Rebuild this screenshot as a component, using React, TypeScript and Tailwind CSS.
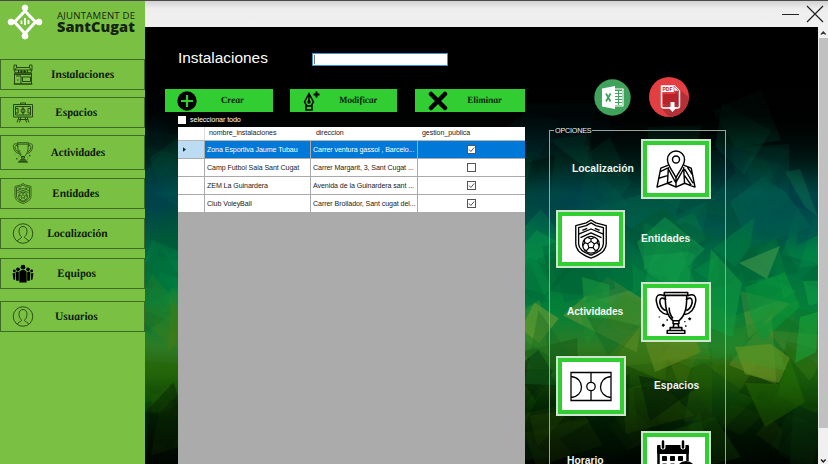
import React from "react";

const sans = "font-['Liberation_Sans',Arial,sans-serif]";
const script = "font-['Liberation_Serif',serif] font-bold italic";

type IconProps = { className?: string };

/* ---------- sidebar + tile drawings ---------- */

const Store = ({ className }: IconProps) => (
  <svg viewBox="0 0 42 42" className={className} fill="none" stroke="currentColor" strokeWidth="1.8">
    <path d="M3 2h5v5h26V2h5v10l-3 6H6l-3-6zM3 12h36M8 7l-3 5M34 7l3 5M4 18h34v22H4zM7 24h10v16M20 26h16v9H20zM2 40h38M4 21h34M12 12v6M18 12v6M24 12v6M30 12v6M9 32h3" />
    <path d="M11 15h20" strokeWidth="3" strokeDasharray="2 1.5" />
  </svg>
);

const Board = ({ className }: IconProps) => (
  <svg viewBox="0 0 42 42" className={className} fill="none" stroke="currentColor" strokeWidth="1.8">
    <path d="M2 5h38v25H2zM6 9h30v17H6zM21 9v17M16 5V2h10v3M13 30l-4 11M17 30l-3 11M29 30l4 11M25 30l3 11M12 35h18M6 13h5v9H6M36 13h-5v9h5" />
    <circle cx="21" cy="17.500" r="4" />
  </svg>
);

const Trophy = ({ className }: IconProps) => (
  <svg viewBox="0 0 44 44" className={className} fill="none" stroke="currentColor" strokeWidth="1.6" strokeLinejoin="round">
    <path d="M10 1.500h24v3H10zM11 4.500c0 12 1 20 8 26h6c7-6 8-14 8-26M10 5C4 2 1 5 2 11c1 7 5 12 11 13M12 9C8 6 5 7 5.500 12c1 5 3 7 6 8M34 5c6-3 9 0 8 6-1 7-5 12-11 13M32 9c4-3 7-2 6.500 3-1 5-3 7-6 8M15 17c0 5 2 9 4 11M19 30.500h6v3h-6zM20 33.500l-1 4h6l-1-4M16 37.500h12v3H16zM13 40.500h18v3H13z" />
    <path d="M9 33.500v3M7.500 35h3M36 27v3M34.500 28.500h3M13 29v1.500M32 35v1.500M5 26v1M31 31v1" strokeWidth="1.500" />
  </svg>
);

const Badge = ({ className }: IconProps) => (
  <svg viewBox="0 0 36 42" className={className} fill="none" stroke="currentColor" strokeWidth="1.4" strokeLinejoin="round">
    <path d="M18 1l5 3 11 3v19c0 8-7 12-16 15C9 38 2 34 2 26V7l11-3z" />
    <path d="M18 4l5 3 8 2v17c0 6-6 9.500-13 12C11 35.500 5 32 5 26V9l8-2z" />
    <path d="M5 16l13-5.500L31 16M7 19.500l11-5 11 5M9 12l5-2.200M22 9.800l5 2.200" />
    <circle cx="18" cy="27" r="8.800" />
    <path d="M18 23.500l3.500 2.500-1.300 4h-4.400l-1.300-4zM18 23.500V21M21.500 26l3-1.200M20.200 30l2 3M15.800 30l-2 3M14.500 26l-3-1.200M14.500 19.300L18 21l3.500-1.700M9.400 28l2.100-3.200-.5-3.200M26.600 28l-2.100-3.200.5-3.200M13.800 33l-3-.5M22.200 33l3-.5" strokeWidth="1.200" />
  </svg>
);

const Person = ({ className }: IconProps) => (
  <svg viewBox="0 0 42 42" className={className} fill="none" stroke="currentColor" strokeWidth="1.7">
    <circle cx="21" cy="21" r="19.500" />
    <path d="M10 36c1-4 7-4 8-7 0-3-5-4-5-12 0-7 3-10 8-10s8 3 8 10c0 8-5 9-5 12 1 3 7 3 8 7" />
  </svg>
);

const Team = ({ className }: IconProps) => (
  <svg viewBox="0 0 42 34" className={className} fill="black">
    <circle cx="21" cy="5" r="4.500" />
    <circle cx="11.500" cy="9" r="3.500" />
    <circle cx="30.500" cy="9" r="3.500" />
    <circle cx="4.500" cy="12" r="2.700" />
    <circle cx="37.500" cy="12" r="2.700" />
    <path d="M14 13q7-5 14 0v21H14zM7 14q3-2 6 0v17H8zM29 14q3-2 6 0l-1 17h-5zM1 17q3-2 5 0v12H3zM36 17q3-2 5 0l-2 12h-3z" />
  </svg>
);

const MapPin = ({ className }: IconProps) => (
  <svg viewBox="0 0 44 40" className={className} fill="none" stroke="currentColor" strokeWidth="1.5" strokeLinejoin="round">
    <path d="M14 16l-8 3-4 20 11-4 9 4 9-4 11 4-4-20-8-3M14 18l-1 17M30 18l1 17M22 29v10M5 23l8-4M3 30l10-3M14 20l8 15M18 33l-5 2M30 20l-8 14M31 20l9 15M34 18l6 9M31 27l7 10" />
    <path d="M22 29c-5-9-9-13-9-19a9 9 0 0 1 18 0c0 6-4 10-9 19z" fill="white" />
    <circle cx="22" cy="10" r="3.700" />
  </svg>
);

const Court = ({ className }: IconProps) => (
  <svg viewBox="0 0 42 30" className={className} fill="none" stroke="currentColor" strokeWidth="1.300">
    <path d="M1 1h40v28H1zM21 1v28M1 5c14 1 14 20 0 21M41 5c-14 1-14 20 0 21" />
    <circle cx="21" cy="15" r="4.200" fill="white" />
  </svg>
);

const Calendar = ({ className }: IconProps) => (
  <svg viewBox="0 0 42 42" className={className} fill="none" stroke="currentColor">
    <path d="M3 6h30v7H3z" fill="currentColor" strokeWidth="2" strokeLinejoin="round" />
    <path d="M3.500 10v28h18M32.500 10v11" strokeWidth="2.500" />
    <path d="M8 1v6M28 1v6" stroke="white" strokeWidth="5" strokeLinecap="round" />
    <path d="M8 1.500v6M28 1.500v6" strokeWidth="2.500" strokeLinecap="round" />
    <path d="M7.500 16.500h4v4h-4zM15.500 16.500h4v4h-4zM23.500 16.500h4v4h-4zM7.500 24h4v4h-4zM15.500 24h4v4h-4z" fill="currentColor" strokeWidth="1" />
    <circle cx="31" cy="31" r="8.500" fill="white" strokeWidth="3" />
    <path d="M31 26v6h4" strokeWidth="2" />
  </svg>
);

/* ---------- polygon wallpaper ---------- */

function makeShards() {
  let seed = 4117;
  const rnd = () => {
    seed = (seed * 16807) % 2147483647;
    return seed / 2147483647;
  };
  const cool = ["#006b4c", "#00293a", "#00583f", "#004a52", "#007a52"];
  const mid = ["#0a9a45", "#00572f", "#12a54a", "#006a3a", "#008c46"];
  const warm = ["#5f9a2a", "#1f8a2c", "#86a036", "#0f6a22", "#4a7a10"];
  const deep = ["#1c6a08", "#003006", "#2c5c06", "#001c04", "#0c4a10"];
  return Array.from({ length: 150 }, (_, i) => {
    const edge = i % 6 === 0;
    const cx = edge ? rnd() * 34 : 375 + rnd() * 305;
    const cy = 95 + rnd() * 335;
    const size = 20 + rnd() * 30;
    const turn = rnd() * 6.28;
    const sides = rnd() > 0.35 ? 4 : 3;
    const points = Array.from({ length: sides }, (_, k) => {
      const a = turn + (k * 6.28) / sides + rnd() * 0.7;
      const r = size * (0.6 + rnd() * 0.5);
      return `${(cx + Math.cos(a) * r).toFixed(1)},${(cy + Math.sin(a) * r).toFixed(1)}`;
    }).join(" ");
    const tones = cy < 205 ? cool : cy < 280 ? mid : cy < 335 ? warm : deep;
    const fill = tones[Math.floor(rnd() * tones.length)];
    return { points, fill, opacity: 0.2 + rnd() * 0.28 };
  });
}
const shards = makeShards();

const Wallpaper = () => (
  <svg viewBox="0 0 673 437" preserveAspectRatio="none" className="absolute inset-0 h-full w-full">
    <defs>
      <linearGradient id="base" x1="0" y1="0" x2="0" y2="1">
        <stop offset="0" stopColor="#000000" />
        <stop offset=".2" stopColor="#000302" />
        <stop offset=".29" stopColor="#002019" />
        <stop offset=".37" stopColor="#004038" />
        <stop offset=".46" stopColor="#005548" />
        <stop offset=".54" stopColor="#00703f" />
        <stop offset=".65" stopColor="#058038" />
        <stop offset=".73" stopColor="#2c7b25" />
        <stop offset=".79" stopColor="#2b6209" />
        <stop offset=".86" stopColor="#083f04" />
        <stop offset=".94" stopColor="#011c03" />
        <stop offset="1" stopColor="#000c02" />
      </linearGradient>
      <linearGradient id="veil" x1="0" y1="0" x2="0" y2="1">
        <stop offset="0" stopColor="#000" />
        <stop offset=".2" stopColor="#000" stopOpacity=".85" />
        <stop offset=".38" stopColor="#000" stopOpacity="0" />
        <stop offset=".8" stopColor="#000" stopOpacity="0" />
        <stop offset="1" stopColor="#000" stopOpacity=".6" />
      </linearGradient>
      <radialGradient id="blue">
        <stop offset="0" stopColor="#00404e" stopOpacity=".8" />
        <stop offset="1" stopColor="#00404e" stopOpacity="0" />
      </radialGradient>
    </defs>
    <rect width="673" height="437" fill="url(#base)" />
    {shards.map((s, i) => (
      <polygon key={i} points={s.points} fill={s.fill} opacity={s.opacity} />
    ))}
    <ellipse cx="650" cy="180" rx="70" ry="45" fill="url(#blue)" />
    <ellipse cx="430" cy="175" rx="60" ry="40" fill="url(#blue)" />
    <ellipse cx="10" cy="165" rx="60" ry="45" fill="url(#blue)" />
    <g opacity=".55">
      <polygon points="585,175 618,150 640,165 667,200 605,220" fill="#00614f" />
      <polygon points="594,236 635,219 622,252" fill="#4b9d50" />
      <polygon points="568,222 610,190 605,220 590,240" fill="#007e46" />
      <polygon points="566,222 597,256 587,310 559,298" fill="#119b41" />
      <polygon points="600,260 640,245 655,280 617,314 606,290" fill="#08983a" />
      <polygon points="590,320 626,317 645,331 634,356 600,347" fill="#6e9a24" />
      <polygon points="600,356 634,357 645,332 660,375 620,400" fill="#287203" />
      <polygon points="640,145 655,142 673,190 660,180" fill="#0a6c50" />
      <polygon points="655,290 673,285 671,325 650,336" fill="#18a53a" />
      <polygon points="492,215 520,190 560,222 530,252 502,245" fill="#12944a" />
      <polygon points="437,250 465,258 462,292 440,290" fill="#1a9a3c" />
      <polygon points="500,315 545,300 556,325 510,345" fill="#6a8c20" />
    </g>
    <rect width="673" height="437" fill="url(#veil)" />
  </svg>
);

/* ---------- sidebar ---------- */

const menu = [
  { label: "Instalaciones", Icon: Store, box: "h-[31px]", pad: "pl-[17px]" },
  { label: "Espacios", Icon: Board, box: "mt-[7px] h-[31px]", pad: "pl-[21px]" },
  { label: "Actividades", Icon: Trophy, box: "mt-[7px] h-[35px]", pad: "pl-[17px]" },
  { label: "Entidades", Icon: Badge, box: "mt-[8px] h-[31px]", pad: "pl-[18px]" },
  { label: "Localización", Icon: Person, box: "mt-[9px] h-[31px]", pad: "pl-[13px]" },
  { label: "Equipos", Icon: Team, box: "mt-[9px] h-[31px]", pad: "pl-[23px]" },
  { label: "Usuarios", Icon: Person, box: "mt-[12px] h-[31px]", pad: "pl-[21px]" },
];

const Sidebar = () => (
  <aside className="w-[145px] shrink-0 bg-[#7ac143]">
    <div className="flex h-[58px] items-start">
      <svg viewBox="0 0 36 36" className="ml-[7px] mt-[3px] h-[36px] w-[36px]" fill="white" stroke="white">
        <path d="M18 7l10.500 11L18 29.500 7.500 18z" fill="none" strokeWidth="3" />
        <path d="M18 3v5M18 28v5M3 18h5M28 18h5" strokeWidth="2.500" />
        <circle cx="18" cy="3.800" r="2.800" />
        <circle cx="18" cy="32" r="3" />
        <circle cx="4" cy="18" r="2.900" />
        <circle cx="32" cy="18" r="2.900" />
        <path d="M14.500 16.500v3.500M18 14v7M21.500 16v4" strokeWidth="1.800" fill="none" />
      </svg>
      <div className="ml-[14px] mt-[8px] whitespace-nowrap font-['Open_Sans','Noto_Sans',sans-serif] text-[#16240f]">
        <div className="h-[11px] text-[9.6px] leading-[14px] tracking-[0.22px]">AJUNTAMENT DE</div>
        <div className="text-[14.5px] font-extrabold leading-[14px] tracking-[0.05px]">SantCugat</div>
      </div>
    </div>
    {menu.map(({ label, Icon, box, pad }) => (
      <button key={label} className={`flex w-full items-center border border-[#3d6a24] pl-[11px] text-[#1d3a10] ${box}`}>
        <Icon className="h-[21px] w-[22px] shrink-0" />
        <span className={`whitespace-nowrap text-[11.5px] leading-none text-[#0c1606] ${script} ${pad}`}>
          <span className="inline-block skew-x-[9deg]">{label}</span>
        </span>
      </button>
    ))}
  </aside>
);

/* ---------- data grid ---------- */

const rows = [
  ["Zona Esportiva Jaume Tubau", "Carrer ventura gassol , Barcelo...", true],
  ["Camp Futbol Sala Sant Cugat", "Carrer Margarit, 3, Sant Cugat ...", false],
  ["ZEM La Guinardera", "Avenida de la Guinardera sant ...", true],
  ["Club VoleyBall", "Carrer Brollador, Sant cugat del...", true],
] as const;

const Check = ({ on }: { on: boolean }) => (
  <svg viewBox="0 0 9 9" className="h-[9px] w-[9px]" fill="white" stroke="#555">
    <rect x=".5" y=".5" width="8" height="8" />
    {on && <path d="M2 4.500L3.800 6.500 7.200 2.500" fill="none" />}
  </svg>
);

const DataGrid = () => (
  <div className="h-[338px] w-[347px] bg-[#ababab] text-[7.1px] leading-none tracking-[-0.08px] text-[#222]">
    <div className="grid h-[14px] grid-cols-[27px_106px_107px_107px] items-center border-b border-[#b8b8b8] bg-white">
      <span className="h-full border-r border-[#ddd]" />
      <span className="pl-1 pt-px">nombre_instalaciones</span>
      <span className="pl-[5px] pt-px">direccion</span>
      <span className="pl-[4px] pt-px">gestion_publica</span>
    </div>
    {rows.map(([name, address, on], i) => (
      <div
        key={name}
        className={`grid h-[18px] grid-cols-[27px_106px_107px_107px] border-b border-[#aaa] ${i === 0 ? "bg-[#0078d7] text-white" : "bg-white"}`}
      >
        <span className={`flex items-center border-r border-[#aaa] pl-[5px] ${i === 0 ? "bg-[#bcdcf4]" : ""}`}>
          {i === 0 && (
            <svg viewBox="0 0 4 6" className="h-[5px] w-[3px]"><path d="M0 0l4 3-4 3z" fill="#222" /></svg>
          )}
        </span>
        <span className="flex items-center whitespace-nowrap border-r border-[#aaa] pl-[2px] pt-[2px]">{name}</span>
        <span className="flex items-center whitespace-nowrap border-r border-[#aaa] pl-[2px] pt-[2px]">{address}</span>
        <span className="flex items-center justify-center"><Check on={on} /></span>
      </div>
    ))}
  </div>
);

/* ---------- toolbar ---------- */

const Toolbar = () => (
  <div className={`flex h-[23px] text-[9.5px] text-[#06230a] ${script}`}>
    <button className="flex w-[108px] items-center bg-[#32cd32] pl-[12px]">
      <svg viewBox="0 0 20 20" className="h-[20px] w-[20px]"><circle cx="10" cy="10" r="9.700" /><path d="M10 4v12M4 10h12" stroke="#32cd32" strokeWidth="2.200" /></svg>
      <span className="ml-[24px] skew-x-[9deg]">Crear</span>
    </button>
    <button className="ml-[17px] flex w-[107px] items-center bg-[#32cd32] pl-[13px]">
      <svg viewBox="0 0 18 20" className="h-[20px] w-[18px]" fill="none" stroke="black" strokeWidth="1.500">
        <path d="M6 2.500L1.500 11l2.500 4h4l2.500-4zM6 3v7M3 15h6v4H3z" />
        <circle cx="6" cy="11" r="1" />
        <path d="M13.500 .5v6M10.500 3.500h6" strokeWidth="2" />
      </svg>
      <span className="ml-[18px] skew-x-[9deg] tracking-[-0.1px]">Modificar</span>
    </button>
    <button className="ml-[18px] flex w-[110px] items-center bg-[#32cd32] pl-[13px]">
      <svg viewBox="0 0 20 20" className="h-[20px] w-[20px]" stroke="black" strokeWidth="4.500" strokeLinecap="round"><path d="M3 3l14 14M17 3L3 17" /></svg>
      <span className="ml-[19px] skew-x-[9deg] tracking-[-0.1px]">Eliminar</span>
    </button>
  </div>
);

/* ---------- options ---------- */

const ExcelBadge = () => (
  <svg viewBox="0 0 37 37" className="mt-[2px] h-[37px] w-[37px]">
    <circle cx="18.500" cy="18.500" r="18.200" fill="#3fa35b" />
    <path d="M19 10h10v17H19z" fill="none" stroke="white" strokeWidth="1.200" />
    <path d="M21 13h7M21 16h7M21 19h7M21 22h7M21 25h7" stroke="white" strokeWidth="1.800" strokeDasharray="3 1" />
    <path d="M8 9.500L21 7v23L8 27.500z" fill="white" />
    <path d="M12 14.500l4.500 8M16.500 14.500l-4.500 8" stroke="#3fa35b" strokeWidth="1.800" />
  </svg>
);

const PdfBadge = () => (
  <svg viewBox="0 0 40 40" className="ml-[18px] h-[40px] w-[40px]">
    <circle cx="20" cy="20" r="20" fill="#e33e42" />
    <path d="M30 12l9.500 8A20 20 0 0 1 20 40l-8-9z" fill="#b52f36" />
    <path d="M12.500 9h13l5 5v15q0 2-2 2H14.500q-2 0-2-2z" fill="none" stroke="white" strokeWidth="1.500" />
    <path d="M12 9h13v6H12z" fill="white" />
    <path d="M25 9v5h5z" fill="white" stroke="#c94047" strokeWidth=".7" />
    <path d="M14 17h15v10H14z" fill="#b6232b" />
    <text x="13.500" y="14" fontSize="5" fontWeight="700" fontFamily="Liberation Sans, sans-serif" fill="#b6232b">PDF</text>
    <path d="M21.500 25h4v5h2.500l-4.500 5-4.500-5h2.500z" fill="white" />
  </svg>
);

const Tile = ({ Icon, size, icon }: { Icon: React.FC<IconProps>; size: string; icon: string }) => (
  <div className={`shrink-0 border-2 border-[#cfe5cf] bg-[#32cd32] p-[4px] ${size}`}>
    <div className="flex h-full w-full items-center justify-center bg-white text-black"><Icon className={icon} /></div>
  </div>
);

const Options = () => (
  <fieldset className="h-[346px] w-[177px] border border-[#93a89c] p-0 text-[10.3px] font-bold text-[#f0f5f1]">
    <legend className="ml-[4px] h-[9px] px-[1px] text-[7.2px] font-normal leading-[9px] tracking-[-0.2px]">OPCIONES</legend>
    <div className="mt-[4px] flex h-[60px] items-center">
      <span className="w-[91px] pl-[22px]">Localización</span>
      <Tile Icon={MapPin} size="h-[60px] w-[70px]" icon="h-[38px] w-[42px]" />
    </div>
    <div className="mt-[11px] flex h-[58px] items-center pl-[6px]">
      <Tile Icon={Badge} size="h-[58px] w-[69px]" icon="h-[40px] w-[36px]" />
      <span className="ml-[16px]">Entidades</span>
    </div>
    <div className="mt-[14px] flex h-[60px] items-center">
      <span className="w-[91px] pl-[17px] tracking-[-0.15px]">Actividades</span>
      <Tile Icon={Trophy} size="h-[60px] w-[70px]" icon="h-[43px] w-[44px]" />
    </div>
    <div className="mt-[14px] flex h-[60px] items-center pl-[6px]">
      <Tile Icon={Court} size="h-[60px] w-[70px]" icon="h-[31px] w-[42px]" />
      <span className="ml-[28px]">Espacios</span>
    </div>
    <div className="mt-[15px] flex h-[60px] items-center">
      <span className="w-[91px] pl-[17px]">Horario</span>
      <Tile Icon={Calendar} size="h-[60px] w-[70px]" icon="h-[42px] w-[42px]" />
    </div>
  </fieldset>
);

export default function App() {
  return (
    <div className={`flex h-[464px] w-[828px] flex-col overflow-hidden bg-[#f0f0f0] ${sans}`}>
      <div className="h-px shrink-0 bg-[#4b494c]" />
      <div className="flex min-h-0 flex-1">
        <Sidebar />
        <div className="flex min-w-0 flex-1 flex-col">
          <header className="flex h-[26px] shrink-0 items-center justify-end bg-gradient-to-b from-[#d2d2d2] via-[#eeeeee] via-30% to-[#f0f0f0] pr-[4px]">
            <svg viewBox="0 0 42 18" className="h-[18px] w-[42px]" stroke="#222" fill="none">
              <path d="M0 9.500h17" strokeWidth="1" />
              <path d="M25 1l16 16M41 1L25 17" strokeWidth="1.200" />
            </svg>
          </header>
          <div className="flex min-h-0 flex-1">
            <main className="relative w-[673px] shrink-0 overflow-hidden bg-black">
              <Wallpaper />
              <div className="relative flex">
                <section className="w-[380px] pl-[20px] pt-[26px]">
                  <div className="flex h-[13px] items-center pl-[13px]">
                    <h1 className="relative -top-[2px] w-[134px] text-[15.4px] leading-none text-white">Instalaciones</h1>
                    <div className="flex h-[13px] w-[136px] items-center border border-[#3f8fce] bg-white pl-[1px]">
                      <span className="h-[9px] w-px bg-[#777]" />
                    </div>
                  </div>
                  <div className="mt-[23px]"><Toolbar /></div>
                  <div className="ml-[13px] flex h-[15px] items-center gap-[4px] text-[7.2px] leading-none text-white">
                    <span className="h-[8px] w-[8px] bg-white" />
                    <span className="pt-px tracking-[-0.1px]">seleccionar todo</span>
                  </div>
                  <div className="ml-[13px]"><DataGrid /></div>
                </section>
                <section className="pl-[24px] pt-[50px]">
                  <div className="flex pl-[45px]"><ExcelBadge /><PdfBadge /></div>
                  <div className="mt-[9px]"><Options /></div>
                </section>
              </div>
            </main>
            <div className="flex w-[10px] flex-col bg-[#f0f0f0]">
              <svg viewBox="0 0 10 11" className="h-[11px] w-[10px]" fill="none" stroke="#333" strokeWidth="1.300"><path d="M3 7.500L5.300 5 7.600 7.500" /></svg>
              <div className="ml-px h-[390px] bg-[#c1c1c1]" />
              <div className="flex-1" />
              <svg viewBox="0 0 10 9" className="h-[9px] w-[10px]" fill="none" stroke="#222" strokeWidth="1.500"><path d="M3 4.500L5.300 7 7.600 4.500" /></svg>
            </div>
          </div>
        </div>
      </div>
    </div>
  );
}
